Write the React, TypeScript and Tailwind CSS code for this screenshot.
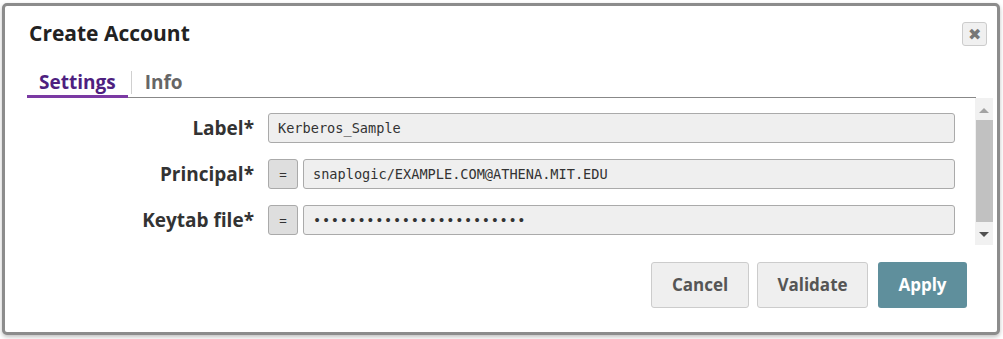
import { useState } from "react";

const labelCls =
  "w-[227px] shrink-0 text-right text-[19px] font-bold leading-[30px] text-[#333]";
const inputCls =
  "flex-1 h-[30px] rounded-[3px] border border-[#aaa] bg-[#efefef] px-[9px] font-['DejaVu_Sans_Mono',monospace] text-[13.6px] leading-[28px] text-[#333] whitespace-nowrap overflow-hidden";

const ExprButton = () => (
  <div className="w-[30px] h-[30px] shrink-0 rounded-[3px] border border-[#aaa] bg-[#dedede] flex items-center justify-center text-[14px] text-[#333] mr-[5px]">
    =
  </div>
);

const FakeScrollbar = () => (
  <div className="w-[18px] shrink-0 bg-[#f1f1f1] flex flex-col items-center pt-[10px] pb-[8px]">
    <div className="w-0 h-0 border-l-[5px] border-r-[5px] border-b-[5px] border-l-transparent border-r-transparent border-b-[#a3a3a3]" />
    <div className="w-[17px] flex-1 bg-[#c1c1c1] mt-[7px] mb-[10px]" />
    <div className="w-0 h-0 border-l-[5px] border-r-[5px] border-t-[5px] border-l-transparent border-r-transparent border-t-[#505050]" />
  </div>
);

export default function App() {
  const [tab, setTab] = useState("settings");

  return (
    <div className="w-[1003px] h-[339px] bg-white font-['Open_Sans',sans-serif] overflow-hidden">
      <div className="ml-[2px] mt-[3px] w-[998px] h-[332px] rounded-[5px] border-[3px] border-[#8c8c8c] bg-white shadow-[0_2px_4px_rgba(0,0,0,0.25)] flex flex-col">
        {/* Header */}
        <div className="flex items-start justify-between pt-[12px] pl-[24px] pr-[10px]">
          <h1 className="text-[21px] font-bold leading-[30px] text-[#222]">Create Account</h1>
          <button className="mt-[4px] w-[25px] h-[24px] rounded-[3px] border border-[#ccc] bg-[#f0f0f0] flex items-center justify-center text-[16px] text-[#777] leading-none">
            ✖
          </button>
        </div>

        {/* Tabs */}
        <div className="mt-[22px] ml-[22px] mr-[21px] flex items-end border-b border-[#888]">
          <div
            onClick={() => setTab("settings")}
            className={`px-[12px] pb-[1px] -mb-px border-b-[3px] text-[19px] font-bold leading-[24px] cursor-pointer ${
              tab === "settings" ? "border-[#7b3aa3] text-[#4e1f80]" : "border-transparent text-[#666]"
            }`}
          >
            Settings
          </div>
          <div className="w-px h-[23px] bg-[#d0d0d0] mb-[3px] ml-[3px]" />
          <div
            onClick={() => setTab("info")}
            className={`px-[13px] pb-[1px] -mb-px border-b-[3px] text-[19px] font-bold leading-[24px] cursor-pointer ${
              tab === "info" ? "border-[#7b3aa3] text-[#4e1f80]" : "border-transparent text-[#666]"
            }`}
          >
            Info
          </div>
        </div>

        {/* Body */}
        <div className="ml-[22px] mr-[4px] h-[147px] flex">
          <div className="flex-1 pr-[20px] pt-[15px] flex flex-col gap-[16px]">
            <div className="flex items-center">
              <div className={labelCls}>Label*</div>
              <div className="ml-[14px] flex-1 flex">
                <div className={inputCls}>Kerberos_Sample</div>
              </div>
            </div>
            <div className="flex items-center">
              <div className={labelCls}>Principal*</div>
              <div className="ml-[14px] flex-1 flex">
                <ExprButton />
                <div className={inputCls}>snaplogic/EXAMPLE.COM@ATHENA.MIT.EDU</div>
              </div>
            </div>
            <div className="flex items-center">
              <div className={labelCls}>Keytab file*</div>
              <div className="ml-[14px] flex-1 flex">
                <ExprButton />
                <div className={`${inputCls} tracking-[0.7px] text-[#1e3a1e]`}>
                  {"•".repeat(24)}
                </div>
              </div>
            </div>
          </div>
          <FakeScrollbar />
        </div>

        {/* Footer buttons */}
        <div className="mt-[17px] pr-[30px] flex justify-end">
          <button className="w-[98px] h-[46px] rounded-[3px] border border-[#ccc] bg-[#efefef] text-[17px] font-bold text-[#555]">
            Cancel
          </button>
          <button className="ml-[8px] w-[111px] h-[46px] rounded-[3px] border border-[#ccc] bg-[#efefef] text-[17px] font-bold text-[#555]">
            Validate
          </button>
          <button className="ml-[10px] w-[89px] h-[46px] rounded-[3px] bg-[#5f8f9c] text-[17px] font-bold text-white">
            Apply
          </button>
        </div>
      </div>
    </div>
  );
}
